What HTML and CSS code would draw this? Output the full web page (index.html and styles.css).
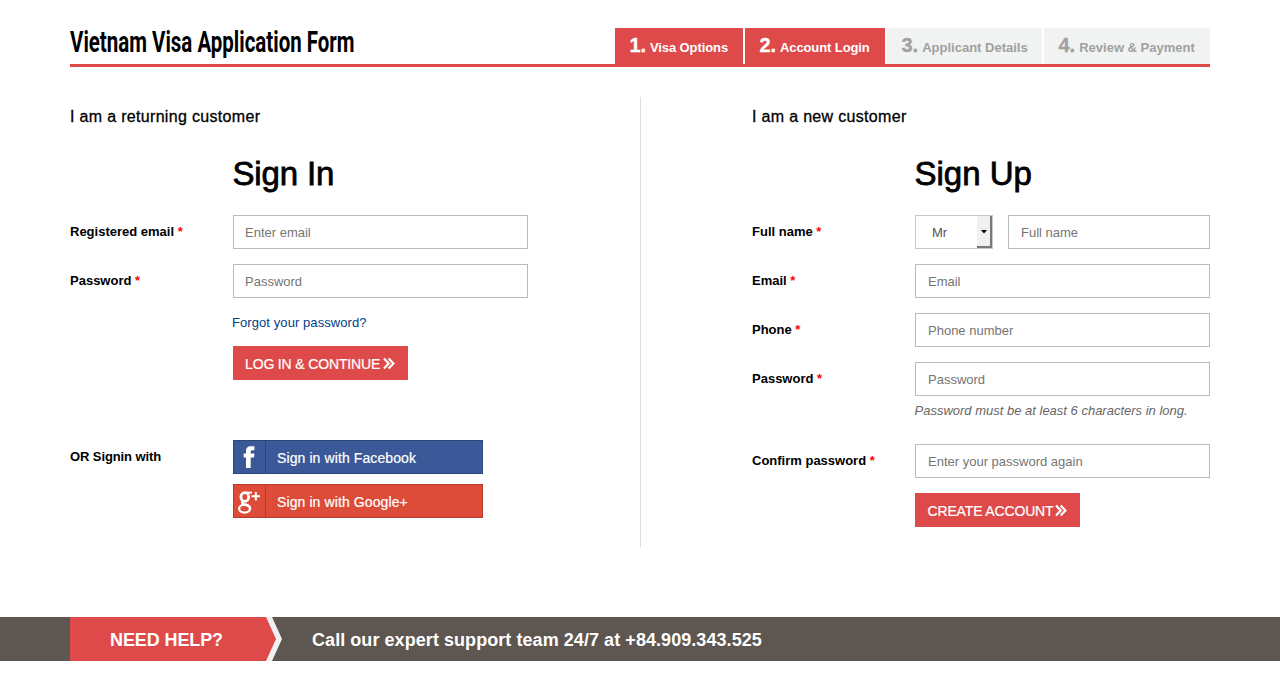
FILE: index.html
```html
<!DOCTYPE html>
<html lang="en">
<head>
<meta charset="utf-8">
<title>Vietnam Visa Application Form</title>
<link rel="stylesheet" href="styles.css">
</head>
<body>
<header class="top container">
  <h1 class="title">Vietnam Visa Application Form</h1>
  <ol class="steps">
    <li class="step active s1"><b class="num">1.</b> <span>Visa Options</span></li>
    <li class="step active s2"><b class="num">2.</b> <span>Account Login</span></li>
    <li class="step s3"><b class="num">3.</b> <span>Applicant Details</span></li>
    <li class="step s4"><b class="num">4.</b> <span>Review &amp; Payment</span></li>
  </ol>
</header>
<main class="container forms">
  <form class="panel signin">
    <p class="lead">I am a returning customer</p>
    <h2 class="heading in">Sign In</h2>
    <div class="row"><label class="label">Registered email <i class="req">*</i></label><input class="input" type="text" placeholder="Enter email"></div>
    <div class="row"><label class="label">Password <i class="req">*</i></label><input class="input" type="text" placeholder="Password"></div>
    <a class="forgot">Forgot your password?</a>
    <button class="btn login" type="button"><span>LOG IN &amp; CONTINUE</span><svg class="chev" viewBox="0 0 12 13"><path d="M1 1.500 5.700 6.500 1 11.500M5.700 1.500 10.400 6.500 5.700 11.500"/></svg></button>
    <div class="row social">
      <span class="label tight">OR Signin with</span>
      <div class="socials">
        <a class="sbtn facebook"><span class="sicon"><svg width="32" height="32" viewBox="0 0 32 32"><path fill="#fff" d="M12 27V16.500H9.700v-4H12v-2c0-3.700 1.700-5.200 5-5.200h3.400v4h-1.900c-1.300 0-1.800.5-1.800 1.700v1.500h3.700l-.4 4h-3.300V27z"/></svg></span><span class="stext">Sign in with Facebook</span></a>
        <a class="sbtn google"><span class="sicon"><svg width="32" height="32" viewBox="0 0 32 32"><g fill="none" stroke="#fff"><ellipse cx="10.800" cy="12" rx="3.900" ry="4.300" stroke-width="2.800"/><path stroke-width="1.800" d="M11 7.600h7"/><path stroke-width="2.600" d="M9 16.200c-1.800 1.900-.6 2.900 2.400 3.600 2.600.6 4.600 1.600 4.600 3.600"/><ellipse cx="10.600" cy="23.600" rx="5.500" ry="4" stroke-width="2.200"/><path stroke-width="2" d="M21.800 7v8.400M17.600 11.200H26"/></g></svg></span><span class="stext">Sign in with Google+</span></a>
      </div>
    </div>
  </form>
  <form class="panel signup">
    <p class="lead">I am a new customer</p>
    <h2 class="heading">Sign Up</h2>
    <div class="row"><label class="label">Full name <i class="req">*</i></label>
      <div class="name">
        <div class="select"><span>Mr</span><span class="arrow"><svg width="6" height="4" viewBox="0 0 6 4"><path d="M0 0h6L3 3.600z"/></svg></span></div>
        <input class="input" type="text" placeholder="Full name">
      </div></div>
    <div class="row"><label class="label">Email <i class="req">*</i></label><input class="input" type="text" placeholder="Email"></div>
    <div class="row"><label class="label">Phone <i class="req">*</i></label><input class="input" type="text" placeholder="Phone number"></div>
    <div class="row"><label class="label">Password <i class="req">*</i></label><input class="input" type="text" placeholder="Password"></div>
    <p class="hint">Password must be at least 6 characters in long.</p>
    <div class="row"><label class="label">Confirm password <i class="req">*</i></label><input class="input" type="text" placeholder="Enter your password again"></div>
    <button class="btn create" type="button"><span>CREATE ACCOUNT</span><svg class="chev" viewBox="0 0 12 13"><path d="M1 1.500 5.700 6.500 1 11.500M5.700 1.500 10.400 6.500 5.700 11.500"/></svg></button>
  </form>
</main>
<footer class="help">
  <div class="container helprow">
    <div class="ribbon-edge"><div class="ribbon">NEED HELP?</div></div>
    <p class="call">Call our expert support team 24/7 at +84.909.343.525</p>
  </div>
</footer>
</body>
</html>
```
FILE: styles.css
```css
* { box-sizing: border-box; }
body { margin: 0; background: #fff; color: #000; font: 13px/18px "Liberation Sans", Arial, sans-serif; }
h1, h2, p, ol { margin: 0; padding: 0; font-weight: normal; }
.container { width: 1140px; margin: 0 auto; }
.top { display: flex; justify-content: space-between; height: 67px; padding-top: 28px; border-bottom: 3px solid #de4a4a; }
.title { width: 290px; white-space: nowrap; font: bold 29px/28px Roboto, sans-serif; transform: scaleX(.706); transform-origin: 0 0; }
.steps { display: flex; gap: 2px; list-style: none; }
.step { display: flex; gap: 4px; align-items: baseline; height: 36px; padding-left: 14.500px; line-height: 34px; font-weight: bold; letter-spacing: -.1px; background: #f1f3f2; color: #a0a0a0; white-space: nowrap; }
.step.active { background: #de4a4a; color: #fff; }
.num { font-size: 20px; -webkit-text-stroke: .3px; }
.s1 { width: 128px; }
.s2 { width: 140px; }
.s3 { width: 155px; }
.s4 { width: 166px; }
.s3, .s4 { letter-spacing: 0; }
.forms { display: flex; height: 450px; margin-top: 30px; }
.panel { display: flex; flex-direction: column; align-items: flex-start; }
.signin { width: 571px; border-right: 1px solid #ddd; }
.signup { padding-left: 111px; width: 569px; }
.lead { margin-top: 10px; font-size: 16px; line-height: 20px; letter-spacing: .32px; -webkit-text-stroke: .3px; }
.heading { margin: 28px 0 23px 162.500px; font-size: 33px; line-height: 37px; -webkit-text-stroke: .8px; }
.in { letter-spacing: -.15px; }
.row { display: flex; margin-bottom: 15px; }
.label { width: 163px; padding-top: 8px; font-weight: bold; }
.tight { letter-spacing: -.1px; }
.req { color: #f00; font-style: normal; }
.input { width: 295px; height: 34px; padding: 1px 12px 0; border: 1px solid #bbb; border-radius: 0; background: #fff; font: inherit; color: #555; }
.signin .input { padding-left: 11px; }
.input::placeholder { color: #757575; opacity: 1; }
.forgot { margin: 1px 0 14px 162px; color: #004085; letter-spacing: .08px; }
.btn { display: flex; align-items: center; justify-content: space-between; height: 34px; margin-left: 163px; padding: 1px 13px 0 12px; border: 0; background: #de4a4a; color: #fff; font: 14px "Liberation Sans", Arial, sans-serif; letter-spacing: -.15px; white-space: nowrap; -webkit-text-stroke: .2px; }
.login { width: 175px; }
.create { width: 165px; padding-left: 12.500px; }
.chev { width: 12px; height: 13px; fill: none; stroke: #fff; stroke-width: 2.200; }
.social { margin-top: 60px; }
.socials { display: flex; flex-direction: column; gap: 10px; }
.sbtn { display: flex; width: 250px; height: 34px; border: 1px solid; color: #fff; font-size: 14px; line-height: 34px; }
.facebook { background: #3b5998; border-color: #2d4679; }
.google { background: #dd4b39; border-color: #b63a2b; }
.sicon { width: 32px; border-right: 1px solid; }
.sicon svg { display: block; }
.facebook .sicon { border-color: #2d4679; }
.google .sicon { border-color: #b63a2b; }
.stext { padding-left: 11px; letter-spacing: .1px; -webkit-text-stroke: .2px; }
.name { display: flex; gap: 15px; }
.name .input { width: 202px; }
.select { display: flex; justify-content: space-between; width: 78px; height: 34px; border: 1px solid #c8c8c8; padding-left: 16px; color: #555; line-height: 34px; }
.arrow { display: flex; align-items: center; justify-content: center; width: 15px; background: #f0f0f0; border-right: 2px solid #777; border-bottom: 2px solid #777; }
.arrow svg { margin-top: 2px; }
.hint { margin: -9px 0 24px 162.500px; color: #666; font-style: italic; }
.help { height: 44px; margin-top: 70px; background: #5e5651; color: #fff; font-size: 18px; font-weight: bold; line-height: 46px; }
.helprow { display: flex; }
.ribbon-edge { width: 212px; height: 44px; background: #f0f0f0; clip-path: polygon(0 0, 202px 0, 100% 50%, 202px 100%, 0 100%); }
.ribbon { width: 206px; height: 44px; padding-left: 40px; letter-spacing: -.1px; background: #de4a4a; clip-path: polygon(0 0, 196px 0, 100% 50%, 196px 100%, 0 100%); }
.call { margin-left: 30px; font-weight: bold; letter-spacing: .06px; }
```
